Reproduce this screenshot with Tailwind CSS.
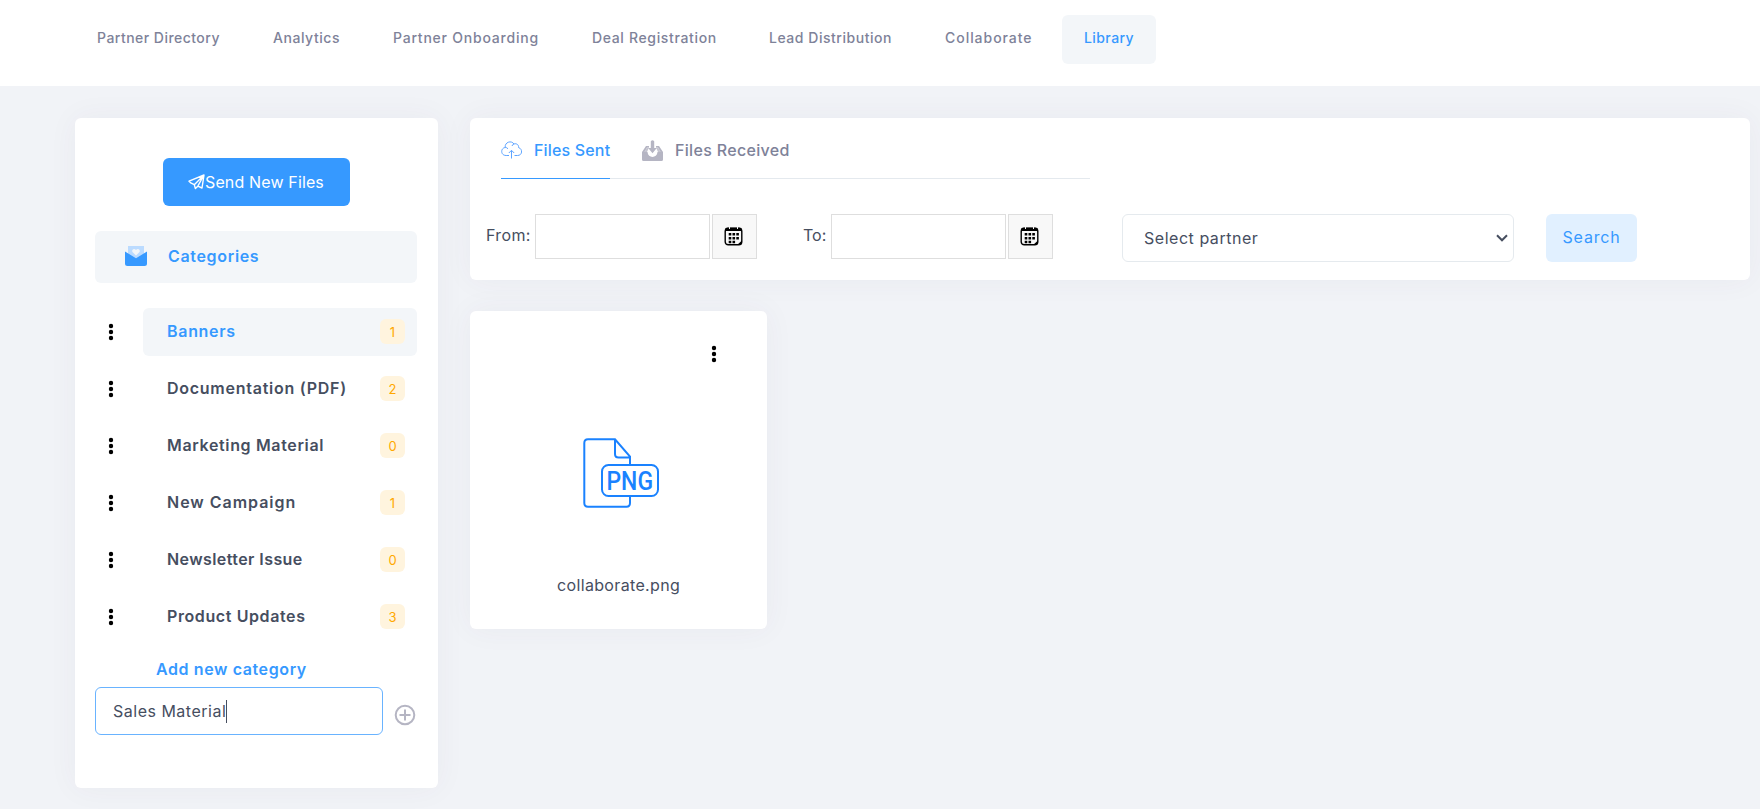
<!DOCTYPE html>
<html lang="en">
<head>
<meta charset="utf-8">
<title>Library</title>
<script src="https://cdn.jsdelivr.net/npm/@tailwindcss/browser@4"></script>
</head>
<body class="h-[809px] overflow-hidden bg-[#f1f3f7] font-['Inter',sans-serif] text-[16px] leading-6 text-[#464e5f]">
<header class="h-[86px] bg-white pl-[75px] pt-[15px]">
  <nav class="flex gap-[7px] text-[14px] font-medium text-[#7e8299] [&>a]:flex [&>a]:h-[49px] [&>a]:items-center [&>a]:whitespace-nowrap [&>a]:rounded-md [&>a]:pb-[3px] [&>a]:pl-[22px]">
    <a class="w-[169px] tracking-[0.47px]">Partner Directory</a>
    <a class="w-[113px] tracking-[0.55px]">Analytics</a>
    <a class="w-[192px] tracking-[0.78px]">Partner Onboarding</a>
    <a class="w-[170px] tracking-[0.65px]">Deal Registration</a>
    <a class="w-[169px] tracking-[0.53px]">Lead Distribution</a>
    <a class="w-[132px] tracking-[0.96px]">Collaborate</a>
    <a class="w-[94px] bg-[#f3f6f9] tracking-[0.42px] text-[#3699ff]">Library</a>
  </nav>
</header>
<main class="flex items-start gap-8 pl-[75px] pt-8">
  <aside class="h-[670px] w-[363px] shrink-0 rounded-md bg-white px-5 pt-10 shadow-[0_0_30px_rgba(82,63,105,0.05)]">
    <button class="ml-[68px] flex h-12 w-[187px] items-center rounded-md bg-[#3699ff] pb-px pl-[25px] text-white">
      <svg class="h-4 w-[17px]" viewBox="0 0 17 16" fill="none" stroke="currentColor" stroke-width="1.4" stroke-linejoin="round"><path d="M1 7.2 16 1 14 14 9.8 12.2 7.4 14.6 6.3 10.7 3.2 9.2zM6.3 10.7 16 1 9.8 12.2"/></svg>
      <span class="tracking-[0.14px]">Send New Files</span>
    </button>
    <div class="mt-[25px] flex h-[52px] w-[322px] items-center rounded-md bg-[#f3f6f9] pb-0.5 pl-[30px] font-semibold text-[#3699ff]">
      <svg class="mr-[21px] h-5 w-[22px]" viewBox="0 0 22 20"><path d="M3 0H19V9L11 13 3 9z" fill="#bbdbff"/><path d="M11 9.500 7.500 6C6 3.600 9.500 1.600 11 4 12.500 1.600 16 3.600 14.500 6z" fill="#f3f6f9"/><path d="M0 5.500 11 12.300 22 5.500V17.500Q22 20 19.500 20H2.500Q0 20 0 17.500z" fill="#3699ff"/></svg>
      <span class="tracking-[0.67px]">Categories</span>
    </div>
    <ul class="mt-[25px] flex flex-col gap-[9px] font-semibold [&>li]:flex [&>li]:items-center [&>li>svg]:ml-[13px] [&>li>svg]:mr-[29px] [&>li>svg]:h-[18px] [&>li>svg]:w-1.5 [&>li>div]:flex [&>li>div]:h-12 [&>li>div]:w-[274px] [&>li>div]:items-center [&>li>div]:justify-between [&>li>div]:rounded-md [&>li>div]:pl-6 [&>li>div]:pr-3 [&>li>div]:pb-px [&_span]:pb-px [&_b]:flex [&_b]:h-[25px] [&_b]:w-[25px] [&_b]:items-center [&_b]:justify-center [&_b]:rounded-md [&_b]:bg-[#fff4de] [&_b]:text-[13px] [&_b]:font-normal [&_b]:text-[#ffa800]">
      <li><svg viewBox="0 0 6 18"><path d="M3 3h0M3 9h0M3 15h0" stroke="#000" stroke-width="4.400" stroke-linecap="round"/></svg><div class="bg-[#f3f6f9] text-[#3699ff]"><span class="tracking-[0.7px]">Banners</span><b>1</b></div></li>
      <li><svg viewBox="0 0 6 18"><path d="M3 3h0M3 9h0M3 15h0" stroke="#000" stroke-width="4.400" stroke-linecap="round"/></svg><div><span class="tracking-[0.74px]">Documentation (PDF)</span><b>2</b></div></li>
      <li><svg viewBox="0 0 6 18"><path d="M3 3h0M3 9h0M3 15h0" stroke="#000" stroke-width="4.400" stroke-linecap="round"/></svg><div><span class="tracking-[0.65px]">Marketing Material</span><b>0</b></div></li>
      <li><svg viewBox="0 0 6 18"><path d="M3 3h0M3 9h0M3 15h0" stroke="#000" stroke-width="4.400" stroke-linecap="round"/></svg><div><span class="tracking-[0.98px]">New Campaign</span><b>1</b></div></li>
      <li><svg viewBox="0 0 6 18"><path d="M3 3h0M3 9h0M3 15h0" stroke="#000" stroke-width="4.400" stroke-linecap="round"/></svg><div><span class="tracking-[0.42px]">Newsletter Issue</span><b>0</b></div></li>
      <li><svg viewBox="0 0 6 18"><path d="M3 3h0M3 9h0M3 15h0" stroke="#000" stroke-width="4.400" stroke-linecap="round"/></svg><div><span class="tracking-[0.6px]">Product Updates</span><b>3</b></div></li>
    </ul>
    <div class="mt-4 pl-[61px] font-semibold tracking-[0.6px] text-[#3699ff]">Add new category</div>
    <div class="mt-1.5 flex items-center gap-[11px]">
      <div class="flex h-12 w-[288px] items-center rounded-md border border-[#69b3ff] pl-[17px]"><span class="tracking-[0.5px]">Sales Material</span><i class="h-[23px] w-px bg-[#464e5f]"></i></div>
      <svg class="mt-[7px] h-[22px] w-[22px] shrink-0" viewBox="0 0 22 22" fill="none" stroke="#b5b5c3" stroke-width="2"><circle cx="11" cy="11" r="9.300"/><path d="M11 5.500v11M5.500 11h11"/></svg>
    </div>
  </aside>
  <div class="w-[1280px] shrink-0">
    <section class="h-[162px] rounded-md bg-white shadow-[0_0_30px_rgba(82,63,105,0.05)]">
      <div class="ml-[31px] flex h-[61px] w-[589px] gap-8 border-b border-[#e4e9ee] font-medium">
        <div class="flex h-[61px] w-[109px] items-center border-b border-[#3699ff] pt-[3px] text-[#3699ff]">
          <svg class="mr-3 h-[18px] w-[21px] shrink-0" viewBox="0 0 21 18" fill="none" stroke="#5ea4ff" stroke-width="1"><path d="M8 14.500H5.200C-.7 14.500-.5 7 4.200 6.500 3.500 1 10.500-1 13 3 15.500 2 18 4 17.500 6.500 22 8 21.500 14.500 16.500 14.500H13.500M4.200 6.500Q5.800 6.300 7 7.800M13 3Q11.500 3.300 11 5M10.500 17.500V9.500M7.800 12 10.500 9.300 13.200 12"/></svg>
          <span class="whitespace-nowrap tracking-[0.17px]">Files Sent</span>
        </div>
        <div class="flex h-[61px] items-center pt-[3px] text-[#7e8299]">
          <svg class="mr-3 h-[21px] w-[21px]" viewBox="0 0 21 21"><path d="M4 6H7V11L10.500 15 14 11V6H17L21 12V19.500Q21 21 19.500 21H1.500Q0 21 0 19.500V12z" fill="#b5b5c3"/><path d="M5 7.500H16L18.500 12H15.500C15 18.500 6 18.500 5.500 12H2.500z" fill="#fff"/><path d="M5 7.500 2.500 12H5L7 7.500zM16 7.500 18.500 12H16L14 7.500z" fill="#b5b5c3" fill-opacity=".8"/><path d="M8.800 1.300Q10.500-1 12.200 1.300V8H14.800L10.500 13.300 6.200 8H8.800z" fill="#b5b5c3"/></svg>
          <span class="tracking-[0.33px]">Files Received</span>
        </div>
      </div>
      <div class="mt-[35px] flex items-start pl-4 [&_.f]:h-[45px] [&_.f]:border [&_.f]:border-[#dedede]">
        <label class="w-[49px] pt-[9px] tracking-[0.35px]">From:</label>
        <div class="f w-[175px]"></div>
        <div class="f ml-[2px] flex w-[45px] items-center justify-center bg-[#f8f8f8] pb-px pr-0.5"><svg class="h-5 w-[19px]" viewBox="0 0 19 20"><rect x="1.200" y="2.500" width="16.600" height="16.300" rx="3" fill="none" stroke="#000" stroke-width="1.400"/><path d="M1 5V3.500Q1 1.500 3.500 1.500H15.500Q18 1.500 18 3.500V5z"/><path d="M18 14.500V16.500Q18 19 15 19H13z"/><path d="M5.500 0V3M13.500 0V3" stroke="#f8f8f8" stroke-width="1"/><path d="M4.700 8.300h2.600M8.500 8.300h2.600M12.300 8.300h2.600M4.700 12.200h2.600M8.500 12.200h2.600M12.300 12.200h2.600M4.700 16h2.600M8.500 16h2.600" stroke="#000" stroke-width="2.500"/></svg></div>
        <label class="ml-[46px] w-[28px] pt-[9px]">To:</label>
        <div class="f w-[175px]"></div>
        <div class="f ml-[2px] flex w-[45px] items-center justify-center bg-[#f8f8f8] pb-px pr-0.5"><svg class="h-5 w-[19px]" viewBox="0 0 19 20"><rect x="1.200" y="2.500" width="16.600" height="16.300" rx="3" fill="none" stroke="#000" stroke-width="1.400"/><path d="M1 5V3.500Q1 1.500 3.500 1.500H15.500Q18 1.500 18 3.500V5z"/><path d="M18 14.500V16.500Q18 19 15 19H13z"/><path d="M5.500 0V3M13.500 0V3" stroke="#f8f8f8" stroke-width="1"/><path d="M4.700 8.300h2.600M8.500 8.300h2.600M12.300 8.300h2.600M4.700 12.200h2.600M8.500 12.200h2.600M12.300 12.200h2.600M4.700 16h2.600M8.500 16h2.600" stroke="#000" stroke-width="2.500"/></svg></div>
        <div class="ml-[69px] flex h-12 w-[392px] items-center justify-between rounded-md border border-[#e5eaee] pl-[21px] pr-[5px]"><span class="tracking-[0.53px]">Select partner</span><svg class="h-2 w-3" viewBox="0 0 12 8" fill="none" stroke="#464e5f" stroke-width="2"><path d="M1 1.300 6 6.300 11 1.300"/></svg></div>
        <button class="ml-8 flex h-12 w-[91px] items-center justify-center rounded-md bg-[#e1f0ff] pb-0.5 tracking-[0.8px] text-[#3699ff]">Search</button>
      </div>
    </section>
    <section class="mt-[31px] flex h-[318px] w-[297px] flex-col rounded-md bg-white pt-[34px] shadow-[0_0_30px_rgba(82,63,105,0.05)]">
      <svg class="ml-[241px] h-[18px] w-1.5" viewBox="0 0 6 18"><path d="M3 3h0M3 9h0M3 15h0" stroke="#000" stroke-width="4.400" stroke-linecap="round"/></svg>
      <svg class="ml-[113px] mt-[75px] h-[70px] w-[76px]" viewBox="0 0 76 70" fill="none" stroke="#1a82ff" stroke-width="2"><path d="M47 26V18.500L32 1.300H5Q1.300 1.300 1.300 5V65Q1.300 68.700 5 68.700H43.500Q47 68.700 47 65V59M32 1.300V16Q32 19.500 35.500 19.500H47"/><rect x="19" y="27" width="56" height="31" rx="6.500"/><text x="23.500" y="51.500" textLength="46.500" lengthAdjust="spacingAndGlyphs" font-family="Roboto" font-size="25" font-weight="500" fill="#1a82ff" stroke="none">PNG</text></svg>
      <div class="mt-[65px] pl-[87px] tracking-[0.35px]">collaborate.png</div>
    </section>
  </div>
</main>
</body>
</html>
